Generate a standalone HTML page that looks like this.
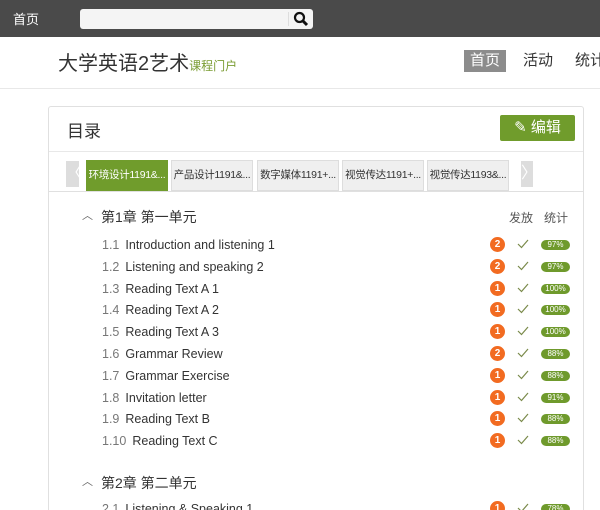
<!DOCTYPE html>
<html><head><meta charset="utf-8"><style>
*{margin:0;padding:0;box-sizing:border-box}
html{width:600px;height:510px;overflow:hidden}
body{width:600px;height:510px;overflow:hidden;background:#fff;font-family:"Liberation Sans","Noto Sans CJK SC",sans-serif;position:relative;color:#333}
.abs{position:absolute}
.bar{left:0;top:0;width:600px;height:37px;background:#4a4a4a}
.row{position:absolute;left:0;width:600px;height:20px}
.num{position:absolute;left:102px;font-size:12.5px;color:#777;line-height:20px;white-space:nowrap}
.num span{color:#333;margin-left:6px}
.c{position:absolute;left:490px;top:2px;width:15px;height:15px;border-radius:8px;background:#f26b21;color:#fff;font-size:10px;font-weight:bold;text-align:center;line-height:15px}
.ck{position:absolute;left:517px;top:3px;width:12px;height:12px}
.p{position:absolute;left:541px;top:5px;width:29px;height:10px;border-radius:5px;background:#6f9a2c;color:#fff;font-size:8px;text-align:center;line-height:10px}
.tab{position:absolute;top:160px;height:31px;width:82px;background:#efefef;border:1px solid #ddd;font-size:10.5px;line-height:29px;text-align:center;color:#333;white-space:nowrap;overflow:hidden;letter-spacing:-0.3px}
</style></head><body>
<div class="abs bar"></div>
<div class="abs" style="left:13px;top:9px;color:#fff;font-size:13px">首页</div>
<div class="abs" style="left:80px;top:9px;width:233px;height:20px;background:#f4f4f4;border-radius:3px"></div>
<div class="abs" style="left:288px;top:12px;width:1px;height:14px;background:#ddd"></div>
<svg class="abs" style="left:293px;top:11px" width="16" height="16"><circle cx="6.5" cy="6.5" r="4.5" fill="none" stroke="#111" stroke-width="2.2"/><line x1="10" y1="10" x2="14" y2="14" stroke="#111" stroke-width="3"/></svg>
<div class="abs" style="left:58px;top:47px;font-size:20px;color:#333;white-space:nowrap">大学英语2艺术<span style="font-size:12px;color:#7a9c33">课程门户</span></div>
<div class="abs" style="left:464px;top:50px;width:42px;height:22px;background:#8c8c8c;color:#fff;font-size:15px;text-align:center;line-height:22px">首页</div>
<div class="abs" style="left:523px;top:50px;font-size:15px;line-height:22px">活动</div>
<div class="abs" style="left:575px;top:50px;font-size:15px;line-height:22px;white-space:nowrap">统计</div>
<div class="abs" style="left:0;top:88px;width:600px;height:1px;background:#e8e8e8"></div>
<div class="abs" style="left:48px;top:106px;width:536px;height:404px;border:1px solid #e0e0e0;border-bottom:none;border-radius:3px 3px 0 0"></div>
<div class="abs" style="left:67px;top:117px;font-size:17px;color:#333">目录</div>
<div class="abs" style="left:500px;top:115px;width:75px;height:26px;background:#709c2c;border-radius:2px;color:#fff;font-size:15px;line-height:26px;text-align:center;white-space:nowrap">✎ 编辑</div>
<div class="abs" style="left:49px;top:151px;width:534px;height:1px;background:#e8e8e8"></div>
<div class="abs" style="left:66px;top:161px;width:13px;height:26px;background:#ddd;color:#fff;font-size:16px;text-align:center;line-height:26px;overflow:hidden">〈</div>
<div class="tab" style="left:86px;background:#709c2c;color:#fff;border-color:#709c2c">环境设计1191&amp;...</div>
<div class="tab" style="left:171px">产品设计1191&amp;...</div>
<div class="tab" style="left:257px">数字媒体1191+...</div>
<div class="tab" style="left:342px">视觉传达1191+...</div>
<div class="tab" style="left:427px">视觉传达1193&amp;...</div>
<div class="abs" style="left:521px;top:161px;width:12px;height:26px;background:#ddd;color:#fff;font-size:16px;text-align:center;line-height:26px;overflow:hidden">〉</div>
<div class="abs" style="left:49px;top:191px;width:534px;height:1px;background:#e0e0e0"></div>
<div class="abs" style="left:82px;top:207px;font-size:11px;color:#666">︿</div>
<div class="abs" style="left:101px;top:207px;font-size:14px;color:#333">第1章 第一单元</div>
<div class="abs" style="left:509px;top:209px;font-size:12px;color:#555">发放</div>
<div class="abs" style="left:544px;top:209px;font-size:12px;color:#555">统计</div>
<div class="abs" style="left:82px;top:473px;font-size:11px;color:#666">︿</div>
<div class="abs" style="left:101px;top:473px;font-size:14px;color:#333">第2章 第二单元</div>
<div id="rows"></div>
<script>
var d=[["1.1","Introduction and listening 1",2,"97%"],["1.2","Listening and speaking 2",2,"97%"],["1.3","Reading Text A 1",1,"100%"],["1.4","Reading Text A 2",1,"100%"],["1.5","Reading Text A 3",1,"100%"],["1.6","Grammar Review",2,"88%"],["1.7","Grammar Exercise",1,"88%"],["1.8","Invitation letter",1,"91%"],["1.9","Reading Text B",1,"88%"],["1.10","Reading Text C",1,"88%"]];
var h="";
function r(y,a){h+='<div class="row" style="top:'+y+'px"><div class="num">'+a[0]+'<span>'+a[1]+'</span></div><div class="c">'+a[2]+'</div><svg class="ck" viewBox="0 0 12 12"><path d="M1 6 L4.5 9.5 L11 2" fill="none" stroke="#7a8a4a" stroke-width="1.2"/></svg><div class="p">'+a[3]+'</div></div>';}
for(var i=0;i<d.length;i++)r(235+i*21.8,d[i]);
r(499,["2.1","Listening &amp; Speaking 1",1,"78%"]);
document.getElementById("rows").innerHTML=h;
</script>
</body></html>
